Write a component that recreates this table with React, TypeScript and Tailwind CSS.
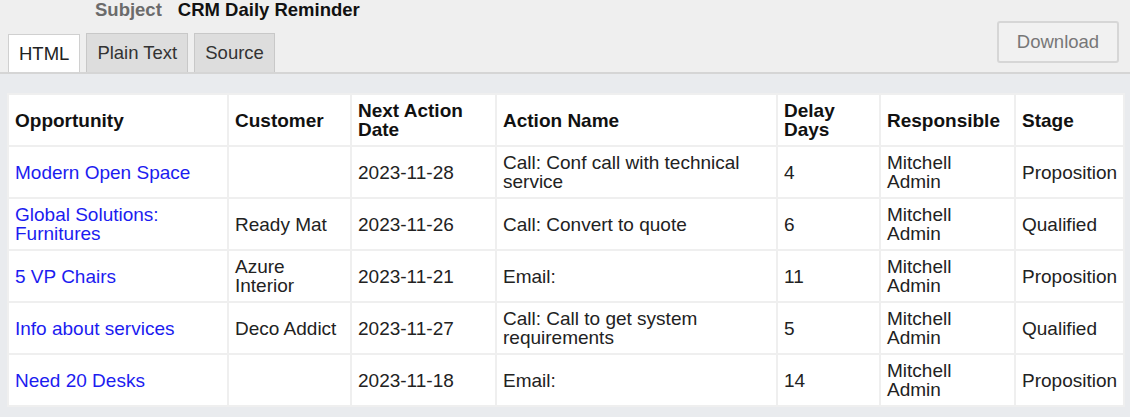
import React from 'react';

const COLUMNS = [
  { label: 'Opportunity', width: 220 },
  { label: 'Customer', width: 123 },
  { label: 'Next Action Date', width: 145 },
  { label: 'Action Name', width: 281 },
  { label: 'Delay Days', width: 103 },
  { label: 'Responsible', width: 135 },
  { label: 'Stage', width: 109 },
];

const ROWS = [
  { opp: 'Modern Open Space', customer: '', date: '2023-11-28', action: 'Call: Conf call with technical service', delay: 4, owner: 'Mitchell Admin', stage: 'Proposition' },
  { opp: 'Global Solutions: Furnitures', customer: 'Ready Mat', date: '2023-11-26', action: 'Call: Convert to quote', delay: 6, owner: 'Mitchell Admin', stage: 'Qualified' },
  { opp: '5 VP Chairs', customer: 'Azure Interior', date: '2023-11-21', action: 'Email:', delay: 11, owner: 'Mitchell Admin', stage: 'Proposition' },
  { opp: 'Info about services', customer: 'Deco Addict', date: '2023-11-27', action: 'Call: Call to get system requirements', delay: 5, owner: 'Mitchell Admin', stage: 'Qualified' },
  { opp: 'Need 20 Desks', customer: '', date: '2023-11-18', action: 'Email:', delay: 14, owner: 'Mitchell Admin', stage: 'Proposition' },
];

const TABS = ['HTML', 'Plain Text', 'Source'];

const cell = 'border-2 border-[#efefef] px-[6px] py-[6px] align-middle';

const App = () => {
  return (
    <div className="min-h-screen bg-[#e9ebee] font-['Liberation_Sans',Arial,sans-serif] text-[#222]">
      {/* message header */}
      <div className="flex items-end justify-between bg-[#efefef] border-b-2 border-[#d5d5d5] h-[74px] pr-[11px]">
        <div className="flex flex-col h-full">
          <div className="flex gap-[16px] pl-[95px] -mt-px h-[34px] text-[18.5px] leading-[21px] font-bold">
            <span className="text-[#6b6b6b]">Subject</span>
            <span className="text-[#111]">CRM Daily Reminder</span>
          </div>
          <div className="flex items-end gap-[6px] pl-[8px] mt-auto">
            {TABS.map((tab, i) => (
              <div
                key={tab}
                className={
                  i === 0
                    ? 'h-[38px] px-[10px] flex items-center bg-white border border-b-0 border-[#d0d0d0] text-[18.5px] text-[#222]'
                    : 'h-[39px] px-[10px] flex items-center bg-[#dddddd] border border-b-0 border-[#c8c8c8] text-[18.5px] text-[#333]'
                }
              >
                {tab}
              </div>
            ))}
          </div>
        </div>
        <button className="mb-[9px] w-[122px] h-[42px] rounded-[3px] border-2 border-[#d6d6d6] bg-[#f1f1f1] text-[18.5px] text-[#777]">
          Download
        </button>
      </div>

      {/* email body */}
      <div className="pt-[19px] pl-[7px] pr-[5px] pb-[10px]">
        <table className="table-fixed border-collapse bg-white w-[1118px] text-[19px] leading-[19px]">
          <colgroup>
            {COLUMNS.map((c) => (
              <col key={c.label} style={{ width: c.width }} />
            ))}
          </colgroup>
          <thead>
            <tr>
              {COLUMNS.map((c) => (
                <th key={c.label} className={`${cell} text-left font-bold text-[#111]`}>
                  {c.label}
                </th>
              ))}
            </tr>
          </thead>
          <tbody>
            {ROWS.map((r) => (
              <tr key={r.opp}>
                <td className={cell}>
                  <a href="#" className="text-[#1c1cf0]">{r.opp}</a>
                </td>
                <td className={cell}>{r.customer}</td>
                <td className={cell}>{r.date}</td>
                <td className={cell}>{r.action}</td>
                <td className={cell}>{r.delay}</td>
                <td className={cell}>{r.owner}</td>
                <td className={cell}>{r.stage}</td>
              </tr>
            ))}
          </tbody>
        </table>
      </div>
    </div>
  );
};

export default App;
